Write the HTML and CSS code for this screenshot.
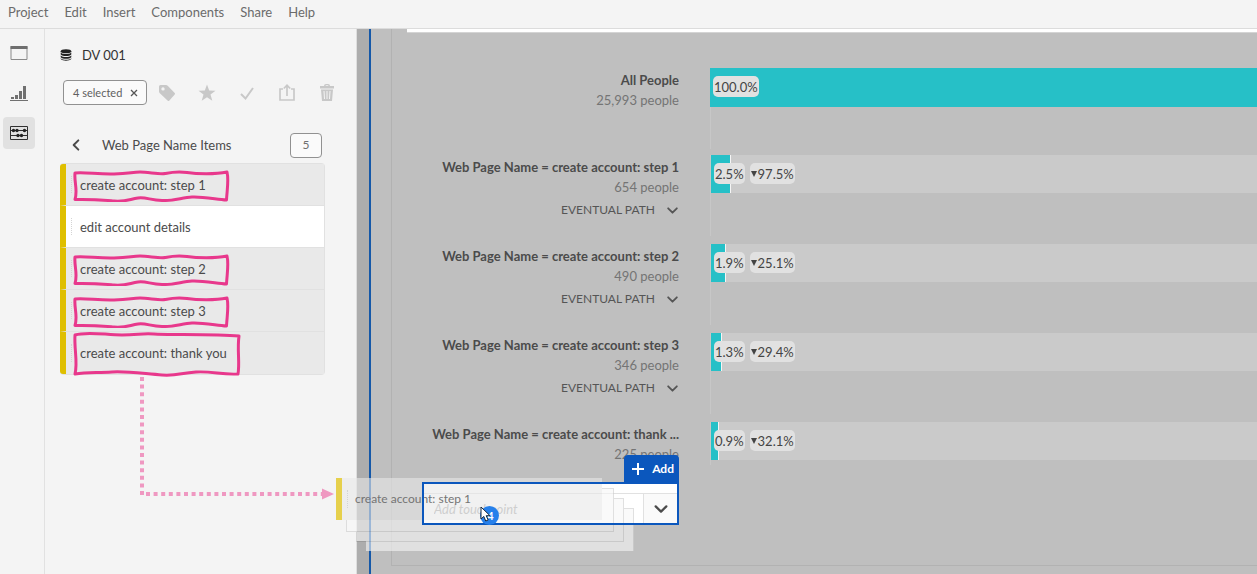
FILE: index.html
```html
<!DOCTYPE html>
<html lang="en">
<head>
<meta charset="utf-8">
<title>DV 001</title>
<link rel="stylesheet" href="styles.css">
</head>
<body>
<svg class="defs" width="0" height="0" aria-hidden="true">
  <symbol id="chevron" viewBox="0 0 12 12"><path d="M2 4l4 4 4-4" fill="none" stroke="currentColor" stroke-width="1.700" stroke-linecap="round" stroke-linejoin="round"/></symbol>
  <symbol id="scribble" viewBox="0 0 158 34"><path d="M3 5C14 4 26 6.500 42 6S60 4 68 4s20 2.500 25 1.500S105 3 115 4.500s28 2 40-.500C157 12 155 22 154.500 32C143 31 130 28.500 120 29s-18 4-30 3.500S74 29 66 30s-12 4-24 3S20 31 3 31.500C6 22 2 14 3 5z" fill="none" stroke="#e8388c" stroke-width="3" stroke-linejoin="round"/></symbol>
</svg>
<div class="app">
  <nav class="menubar">
    <button>Project</button><button>Edit</button><button>Insert</button><button>Components</button><button>Share</button><button>Help</button>
  </nav>
  <div class="workspace">
    <nav class="rail">
      <button class="rail-button" aria-label="Panels"><svg width="20" height="20" viewBox="0 0 20 20"><path d="M2 3.500h16v13H2z" fill="none" stroke="#8a8a8a"/><path d="M1.500 3h17v3h-17z" fill="#6e6e6e"/></svg></button>
      <button class="rail-button" aria-label="Visualizations"><svg width="20" height="20" viewBox="0 0 20 20" fill="#707070"><path d="M1 17h18v1H1zM2 14h3v2H2zM6 12h3v4H6zM10 8h3v8h-3zM14 3h3v13h-3z"/></svg></button>
      <button class="rail-button active" aria-label="Components"><svg width="20" height="20" viewBox="0 0 20 20"><path d="M1.500 3.500h17v13h-17zM1 7.500h18M1 12.500h18" fill="none" stroke="#303030"/><g fill="#222"><circle cx="4.500" cy="7.500" r="1.700"/><circle cx="8" cy="7.500" r="1.700"/><circle cx="15.500" cy="7.500" r="1.700"/><circle cx="9" cy="12.500" r="1.700"/><circle cx="12.500" cy="12.500" r="1.700"/></g></svg></button>
    </nav>
    <aside class="sidebar">
      <div class="dataview">
        <svg width="12" height="12" viewBox="0 0 12 12" fill="#222"><ellipse cx="6" cy="2.300" rx="5.300" ry="2"/><path d="M.7 3.500c2 2 8.600 2 10.600 0v2c-2 2-8.600 2-10.600 0zM.7 6.500c2 2 8.600 2 10.600 0v1.700c-2 2-8.600 2-10.600 0zM.7 9.200c2 2 8.600 2 10.600 0v.8c-2 2.200-8.600 2.200-10.600 0z"/></svg>
        <span>DV 001</span>
      </div>
      <div class="toolbar">
        <button class="chip">4 selected <svg width="8" height="8" viewBox="0 0 8 8"><path d="M1 1l6 6M7 1L1 7" stroke="#555" stroke-width="1.300"/></svg></button>
        <button class="tool" aria-label="Tag"><svg width="20" height="20" viewBox="0 0 20 20"><path fill-rule="evenodd" d="M2 3.500Q2 2 3.500 2H9q1 0 1.700.7l7 7.300q.7.800 0 1.500l-5.500 6.200q-.7.700-1.400 0L2.600 10Q2 9.400 2 8.500zM6 4.200a1.700 1.700 0 100 3.400 1.700 1.700 0 000-3.400z" fill="currentColor"/></svg></button>
        <button class="tool" aria-label="Favorite"><svg width="20" height="20" viewBox="0 0 20 20"><path d="M10 1.500l2.200 6 6.300.2-5 3.900 1.800 6.200-5.300-3.600-5.300 3.600 1.800-6.200-5-3.900 6.300-.2z" fill="currentColor"/></svg></button>
        <button class="tool" aria-label="Approve"><svg width="20" height="20" viewBox="0 0 20 20"><path d="M4 11l4.500 4.500L16 5" fill="none" stroke="currentColor" stroke-width="2"/></svg></button>
        <button class="tool" aria-label="Share"><svg width="20" height="20" viewBox="0 0 20 20"><path d="M6 6H3v11h14V6h-3M10 13V3M6.800 5.500L10 2.200l3.200 3.300" fill="none" stroke="currentColor" stroke-width="1.700"/></svg></button>
        <button class="tool" aria-label="Delete"><svg width="20" height="20" viewBox="0 0 20 20"><path fill-rule="evenodd" d="M7 3q0-2 2-2h2q2 0 2 2h4v2.500H3V3zM8.500 3h3q0-.8-.8-.8H9.300Q8.500 2.200 8.500 3zM4 6.500h12L15 18H5zM6.500 8l.5 8h1l-.5-8zM9.500 8v8h1V8zM12.500 8l-.5 8h1l.5-8z" fill="currentColor"/></svg></button>
      </div>
      <div class="list-head">
        <button class="back" aria-label="Back"><svg width="14" height="14"><use href="#chevron"/></svg></button>
        <span class="list-title">Web Page Name Items</span>
        <span class="count">5</span>
      </div>
      <ul class="items">
        <li class="item selected">create account: step 1<svg class="mark"><use href="#scribble"/></svg></li>
        <li class="item">edit account details</li>
        <li class="item selected">create account: step 2<svg class="mark"><use href="#scribble"/></svg></li>
        <li class="item selected">create account: step 3<svg class="mark"><use href="#scribble"/></svg></li>
        <li class="item selected">create account: thank you<svg class="mark mark-large" viewBox="0 0 170 46"><path d="M3 3C15-1 34 3 50 3S70 1 82 2s60 0 85 2C165 18 168 30 166 42C150 43 140 39 124 40s-18 4-34 3S55 39 40 40S15 40 3 42C6 30 2 17 3 3z" fill="none" stroke="#e8388c" stroke-width="3" stroke-linejoin="round"/></svg></li>
      </ul>
    </aside>
    <main class="canvas">
      <section class="project-panel">
        <div class="visualization">
          <div class="viz-header"></div>
          <div class="funnel">
            <div class="step first">
              <div class="label"><strong>All People</strong><span class="people">25,993 people</span></div>
              <div class="plot"><div class="track"><div class="fill" style="width:100%"></div><div class="values"><span>100.0%</span></div></div></div>
            </div>
            <div class="step">
              <div class="label"><strong>Web Page Name = create account: step 1</strong><span class="people">654 people</span><button class="path">EVENTUAL PATH <svg width="13" height="13"><use href="#chevron"/></svg></button></div>
              <div class="plot"><div class="track"><div class="fill" style="width:2.5%"></div><div class="values"><span>2.5%</span><span><i class="down"></i>97.5%</span></div></div></div>
            </div>
            <div class="step">
              <div class="label"><strong>Web Page Name = create account: step 2</strong><span class="people">490 people</span><button class="path">EVENTUAL PATH <svg width="13" height="13"><use href="#chevron"/></svg></button></div>
              <div class="plot"><div class="track"><div class="fill" style="width:1.9%"></div><div class="values"><span>1.9%</span><span><i class="down"></i>25.1%</span></div></div></div>
            </div>
            <div class="step">
              <div class="label"><strong>Web Page Name = create account: step 3</strong><span class="people">346 people</span><button class="path">EVENTUAL PATH <svg width="13" height="13"><use href="#chevron"/></svg></button></div>
              <div class="plot"><div class="track"><div class="fill" style="width:1.3%"></div><div class="values"><span>1.3%</span><span><i class="down"></i>29.4%</span></div></div></div>
            </div>
            <div class="step last">
              <div class="label"><strong>Web Page Name = create account: thank ...</strong><span class="people">225 people</span>
                <div class="dropzone">
                  <button class="add"><svg width="14" height="14" viewBox="0 0 14 14"><path d="M7 1v12M1 7h12" stroke="#fff" stroke-width="2"/></svg>Add</button>
                  <div class="combo"><input type="text" placeholder="Add touchpoint" aria-label="Add touchpoint"><button class="picker" aria-label="Open list"><svg width="16" height="16"><use href="#chevron"/></svg></button></div>
                </div>
              </div>
              <div class="plot"><div class="track"><div class="fill" style="width:0.9%"></div><div class="values"><span>0.9%</span><span><i class="down"></i>32.1%</span></div></div></div>
            </div>
          </div>
        </div>
      </section>
    </main>
  </div>
  <svg class="arrow" width="196" height="128" viewBox="0 0 196 128"><path d="M4 2V121M8 119H188" fill="none" stroke="#ef98c1" stroke-width="4" stroke-dasharray="4 3.600"/><path d="M184 113.500L196 119l-12 5.500z" fill="#ef98c1"/></svg>
  <div class="drag">
    <svg class="sheets" width="298" height="73" viewBox="0 0 298 73">
      <g fill="#f7f7f7" fill-opacity=".6"><path d="M10 42H266V10H278V53H10z"/><path d="M20 53H278V20H288V63H20z"/><path d="M30 63H288V30H298V73H30z"/></g>
      <g fill="none" stroke="#000" stroke-opacity=".1"><path d="M10.500 42V53.500H277.500V10.500H266M20.500 54V63.500H287.500V20.500H278M288 30.500H297.500V73"/></g>
    </svg>
    <div class="ghost">create account: step 1</div>
  </div>
  <div class="pointer">
    <span class="badge">4</span>
    <svg width="12" height="16" viewBox="0 0 12 16"><path d="M1 1v12l2.800-2.600L5.700 15l2.500-1-2-4.300H10z" fill="#fff" stroke="#1b2b3c"/></svg>
  </div>
</div>
</body>
</html>
```
FILE: styles.css
```css
* { box-sizing: border-box; }
body { margin: 0; font: 13px/20px Lato, "Open Sans", sans-serif; color: #4b4b4b; background: #f4f4f4; }
button, input { font: inherit; color: inherit; border: 0; padding: 0; margin: 0; background: none; }
button { cursor: pointer; }
svg { display: block; flex: none; overflow: visible; }
.defs { position: absolute; }
.app { position: relative; height: 100vh; display: flex; flex-direction: column; overflow: hidden; }
.menubar { display: flex; gap: 16px; height: 29px; flex: none; padding: 2px 8px 6px; border-bottom: 1px solid #dcdcdc; color: #6b6b6b; }
.workspace { flex: 1; min-height: 0; display: flex; }

.rail { flex: none; width: 45px; border-right: 1px solid #e1e1e1; padding: 8px 3px; display: flex; flex-direction: column; gap: 8px; }
.rail-button { width: 32px; height: 32px; display: grid; place-items: center; border-radius: 4px; }
.rail-button.active { background: #e1e1e1; }

.sidebar { flex: none; width: 311px; padding: 16px 31px 0 15px; }
.dataview { display: flex; align-items: center; gap: 10px; color: #333; }
.toolbar { display: flex; align-items: center; margin: 15px 0 0 3px; }
.chip { display: flex; flex: none; align-items: center; justify-content: space-between; width: 84px; height: 25px; padding: 0 8px 0 9px; margin-right: 10px; border: 1px solid #919191; border-radius: 4px; background: #fafafa; font-size: 11px; white-space: nowrap; color: #606060; }
.tool { flex: none; width: 20px; height: 20px; margin-right: 20px; color: #c8c8c8; }
.tool:last-child { margin-right: -10px; }
.list-head { display: flex; align-items: center; height: 26px; margin-top: 27px; padding: 0 3px 0 9px; }
.back { transform: rotate(90deg); }
.list-title { flex: 1; margin-left: 19px; }
.count { width: 32px; height: 25px; line-height: 22px; text-align: center; border: 1px solid #919191; border-radius: 4px; background: #fafafa; font-size: 12px; color: #707070; }
.items { list-style: none; margin: 5px 0 0; padding: 0; border: 1px solid #e1e1e1; border-left: 0; border-radius: 4px; }
.item { position: relative; height: 42px; padding-left: 14px; line-height: 42px; border-left: 6px solid #dfbf00; background: #fff; border-bottom: 1px solid #e1e1e1; }
.item:first-child { border-top-left-radius: 3px; }
.item:last-child { border-bottom: 0; border-bottom-left-radius: 3px; }
.item.selected { background: #e9e9e9; }
.item::before, .ghost::before { content: ""; position: absolute; left: 5px; top: 12px; bottom: 12px; border-left: 1px dotted #d4d4d4; }
.mark { position: absolute; left: 6px; top: 4px; width: 158px; height: 34px; }
.mark-large { top: 0; width: 170px; height: 46px; }

.canvas { flex: 1; min-width: 0; overflow: hidden; padding-left: 12px; background: #adadad; border-left: 1px solid #dedede; }
.project-panel { height: 100%; padding-left: 20px; background: #bfbfbf; border-left: 2px solid #1558a8; }
.visualization { border-left: 1px solid #b2b2b2; border-bottom: 1px solid #b2b2b2; }
.viz-header { height: 4px; margin-left: 15px; background: #fff; border-bottom: 1px solid #d4d4d4; }
.funnel { padding-top: 35px; }
.step { display: flex; gap: 31px; height: 89px; }
.step.first { height: 87px; }
.step.last { height: 143px; }
.label { position: relative; flex: none; width: 287px; padding-top: 2px; display: flex; flex-direction: column; align-items: flex-end; white-space: nowrap; color: #4b4b4b; }
.people { color: #747474; }
.path { display: flex; align-items: center; gap: 11px; margin-top: 3px; font-size: 12px; line-height: 20px; color: #555; }
.plot { flex: 1 0 756px; height: 81px; border-left: 1px solid #c7c7c7; }
.first .plot { border-left: 0; box-shadow: inset 1px 0 #c7c7c7; }
.last .plot { height: 43px; }
.track { position: relative; height: 38px; background: #cacaca; }
.first .track { height: 39px; }
.fill { height: 100%; background: #26c0c7; border-right: 1px solid #f5f5f5; box-sizing: content-box; }
.values { position: absolute; left: 3px; top: 8px; display: flex; gap: 5px; }
.values span { display: flex; align-items: center; height: 21px; padding: 0 1px; border-radius: 5px; background: #e1e1e1; color: #444; }
.down { margin-right: 1px; border: 3px solid transparent; border-top: 6px solid #444; border-bottom: 0; }

.dropzone { position: absolute; right: 0; top: 33px; width: 257px; display: flex; flex-direction: column; align-items: flex-end; }
.dropzone::after { content: ""; position: absolute; z-index: 5; left: 0; right: 0; top: 27px; bottom: 0; border: 2px solid #0b57bd; pointer-events: none; }
.add { display: flex; align-items: center; gap: 7px; height: 28px; padding: 0 5px 0 7px; border-radius: 4px 4px 0 0; background: #0b57bd; color: #fff; font-size: 12px; font-weight: 700; }
.combo { display: flex; width: 100%; height: 42px; padding: 10px 2px 2px; background: #fff; }
.combo input { flex: 1; min-width: 0; padding-left: 10px; border-top: 1px solid #e1e1e1; }
.combo input::placeholder { color: #a8a8a8; font-style: italic; opacity: 1; }
.picker { width: 34px; display: grid; place-items: center; border-top: 1px solid #e1e1e1; border-left: 1px solid #e1e1e1; background: #fafafa; }

.arrow { position: absolute; z-index: 3; left: 138px; top: 375px; }
.drag { position: absolute; z-index: 4; left: 336px; top: 478px; width: 298px; height: 73px; }
.ghost { position: absolute; left: 0; top: 0; width: 266px; height: 42px; padding-left: 13px; line-height: 42px; border-left: 6px solid #e6d04c; background: rgba(232, 232, 232, .6); color: #747474; font-size: 12px; }
.pointer { position: absolute; z-index: 6; left: 480px; top: 506px; }
.pointer svg { position: relative; }
.badge { position: absolute; left: 0; top: 0; width: 19px; height: 19px; padding-left: 2px; border-radius: 50%; background: #2680eb; color: #fff; font-size: 11px; font-weight: 700; line-height: 19px; text-align: center; }
```
